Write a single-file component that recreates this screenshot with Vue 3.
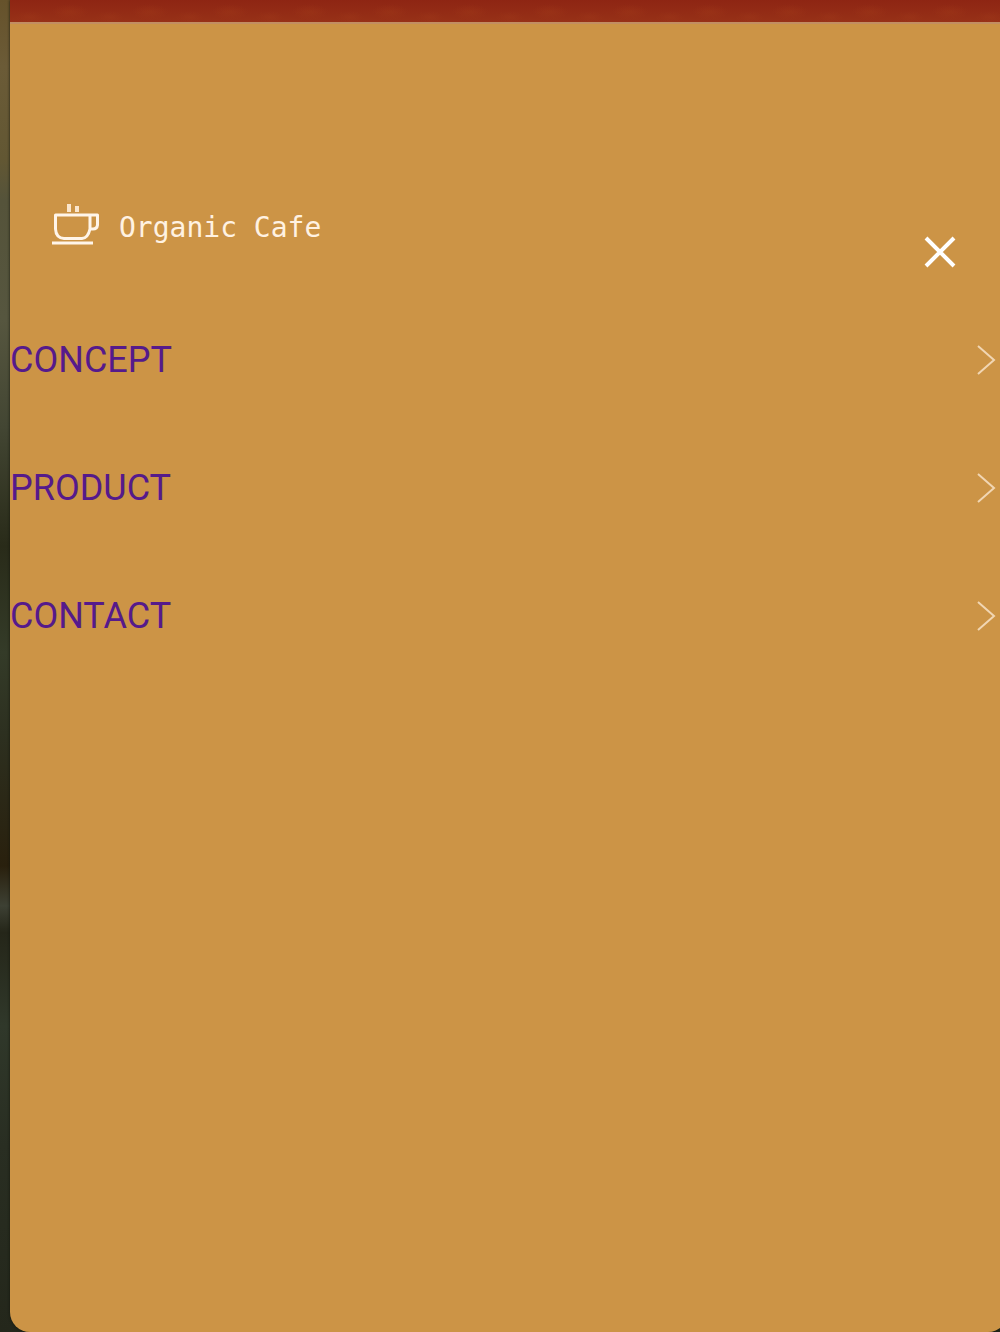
<script setup>
const links = [
  { label: 'CONCEPT', href: '#concept' },
  { label: 'PRODUCT', href: '#product' },
  { label: 'CONTACT', href: '#contact' },
]
</script>

<template>
  <div class="page">
    <div class="window">
      <div class="banner"></div>
      <div class="drawer">
        <header class="head">
          <a class="logo" href="#top">
            <svg class="cup" viewBox="0 0 48 42" aria-hidden="true">
              <path d="M3.5 11H38V25Q36 34 30 34.5H12Q4 34 3.5 25Z M38 11H45.5V21Q45 25 41 25H38" />
              <path class="steam" d="M17 0V8M25 2V8" />
              <path d="M0 39H41" />
            </svg>
            <span>Organic Cafe</span>
          </a>
          <button class="close" type="button" aria-label="Close menu">
            <svg viewBox="0 0 32 32" aria-hidden="true"><path d="M2 2L30 30M30 2L2 30" /></svg>
          </button>
        </header>
        <nav>
          <ul>
            <li v-for="link in links" :key="link.label">
              <a :href="link.href">
                <span>{{ link.label }}</span>
                <svg viewBox="0 0 20 32" aria-hidden="true"><path d="M2 2L18 16L2 30" /></svg>
              </a>
            </li>
          </ul>
        </nav>
      </div>
    </div>
  </div>
</template>

<style>
body {
  margin: 0;
}
</style>

<style scoped>
.page {
  box-sizing: border-box;
  min-height: 100vh;
  padding-left: 10px;
  display: flex;
  overflow: hidden;
  background: linear-gradient(#66522b 0%, #6b5b37 5%, #625733 12%, #55533a 15%, #56563f 24%, #434633 32%, #292b19 41%, #343b28 49%, #2d3020 55%, #29200d 65%, #3d4033 68%, #252619 70%, #30382a 77%, #292e22 86%, #24271b 100%);
}
.window {
  flex: 1;
  display: flex;
  flex-direction: column;
  margin-right: -8px;
  overflow: hidden;
  border-radius: 0 0 20px 20px;
  box-shadow: 0 0 3px #14160d;
}
.banner {
  height: 22px;
  background:
    radial-gradient(ellipse 18px 8px at 60px 12px, #a33c1a55, #a33c1a00) 0 0 / 80px 22px,
    radial-gradient(ellipse 14px 6px at 20px 17px, #a33c1a44, #a33c1a00) 0 0 / 80px 22px,
    linear-gradient(#8e2513, #973117);
}
.drawer {
  flex: 1;
  padding-right: 8px;
  background: linear-gradient(#c28e62 2px, #cc9446 2px);
}
.head {
  display: flex;
  justify-content: space-between;
  align-items: flex-start;
  padding: 182px 44px 0 42px;
  height: 92px;
}
.logo {
  display: flex;
  align-items: flex-start;
  gap: 19px;
  color: #fff2e2;
  font: 28px/48px "DejaVu Sans Mono", monospace;
  text-decoration: none;
}
svg {
  display: block;
  fill: none;
  stroke: #fff;
}
.cup {
  width: 48px;
  height: 42px;
  stroke: #fff5e9;
  stroke-width: 3;
  stroke-linejoin: round;
}
.steam {
  stroke: #fbe6cc;
  stroke-width: 4;
}
.close {
  margin-top: 32px;
  padding: 0;
  border: 0;
  background: none;
}
.close svg {
  width: 32px;
  height: 32px;
  stroke-width: 4;
}
ul {
  margin: 0;
  padding: 0;
  list-style: none;
}
li a {
  display: flex;
  align-items: center;
  justify-content: space-between;
  height: 128px;
  padding-right: 4px;
  color: #551a8b;
  font: 36px/44px Roboto, sans-serif;
  text-decoration: none;
}
li svg {
  width: 20px;
  height: 32px;
  stroke: #f1d6b3;
  stroke-width: 2;
}
</style>
